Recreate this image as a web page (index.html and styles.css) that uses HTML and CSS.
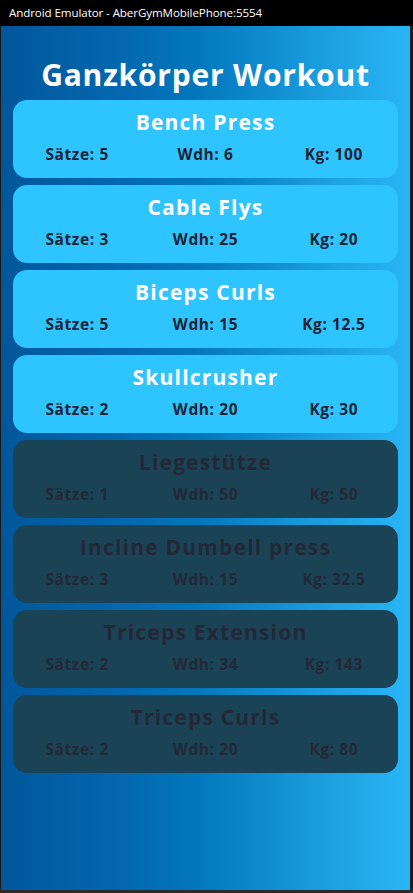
FILE: index.html
```html
<!DOCTYPE html>
<html>
<head>
<meta charset="utf-8">
<link rel="stylesheet" href="styles.css">
</head>
<body>
<div class="titlebar">Android Emulator - AberGymMobilePhone:5554</div>
<div class="frame">
  <main class="screen">
    <h1 class="heading">Ganzkörper Workout</h1>
    <div class="list">
      <div class="card">
        <div class="name">Bench Press</div>
        <div class="stats"><span>Sätze: 5</span><span>Wdh: 6</span><span>Kg: 100</span></div>
      </div>
      <div class="card">
        <div class="name">Cable Flys</div>
        <div class="stats"><span>Sätze: 3</span><span>Wdh: 25</span><span>Kg: 20</span></div>
      </div>
      <div class="card">
        <div class="name">Biceps Curls</div>
        <div class="stats"><span>Sätze: 5</span><span>Wdh: 15</span><span>Kg: 12.5</span></div>
      </div>
      <div class="card">
        <div class="name">Skullcrusher</div>
        <div class="stats"><span>Sätze: 2</span><span>Wdh: 20</span><span>Kg: 30</span></div>
      </div>
      <div class="card done">
        <div class="name">Liegestütze</div>
        <div class="stats"><span>Sätze: 1</span><span>Wdh: 50</span><span>Kg: 50</span></div>
      </div>
      <div class="card done">
        <div class="name">Incline Dumbell press</div>
        <div class="stats"><span>Sätze: 3</span><span>Wdh: 15</span><span>Kg: 32.5</span></div>
      </div>
      <div class="card done">
        <div class="name">Triceps Extension</div>
        <div class="stats"><span>Sätze: 2</span><span>Wdh: 34</span><span>Kg: 143</span></div>
      </div>
      <div class="card done">
        <div class="name">Triceps Curls</div>
        <div class="stats"><span>Sätze: 2</span><span>Wdh: 20</span><span>Kg: 80</span></div>
      </div>
    </div>
  </main>
</div>
</body>
</html>
```
FILE: styles.css
```css
* { box-sizing: border-box; }
html, body {
  margin: 0;
  padding: 0;
  width: 413px;
  height: 893px;
  background: #2b2b2b;
  overflow: hidden;
}
.titlebar {
  height: 26px;
  background: #000;
  color: #fff;
  font-family: "Open Sans", "Noto Sans", sans-serif;
  font-size: 11.6px;
  line-height: 26px;
  padding-left: 9px;
  letter-spacing: -0.1px;
}
.frame {
  height: 864px;
  padding: 0 3px 0 1px;
  background: #1a1a1a;
}
.screen {
  height: 864px;
  background: linear-gradient(to right, #01579b 0%, #0468b0 30%, #0277bd 48%, #1a9ddf 78%, #29b6f6 100%);
  padding: 29px 12px 0 12px;
  font-family: "Open Sans", "DejaVu Sans", sans-serif;
}
.heading {
  margin: 0 0 5px 0;
  height: 40px;
  line-height: 40px;
  text-align: center;
  color: #fff;
  font-size: 30px;
  font-weight: 700;
  letter-spacing: 0.8px;
}
.list {
  display: flex;
  flex-direction: column;
  gap: 7px;
}
.card {
  height: 78px;
  border-radius: 14px;
  background: #2ec4ff;
  padding-top: 8px;
  display: flex;
  flex-direction: column;
  gap: 8px;
}
.card.done {
  background: #1b4356;
}
.name {
  text-align: center;
  color: #fff;
  font-size: 21px;
  font-weight: 700;
  line-height: 28px;
  letter-spacing: 1.2px;
}
.card.done .name {
  color: #232838;
}
.stats {
  display: flex;
  line-height: 20px;
  color: #1f2233;
  font-size: 15.5px;
  font-weight: 700;
  letter-spacing: 0.6px;
}
.card.done .stats {
  color: #232838;
}
.stats span {
  flex: 1;
  text-align: center;
}
```
